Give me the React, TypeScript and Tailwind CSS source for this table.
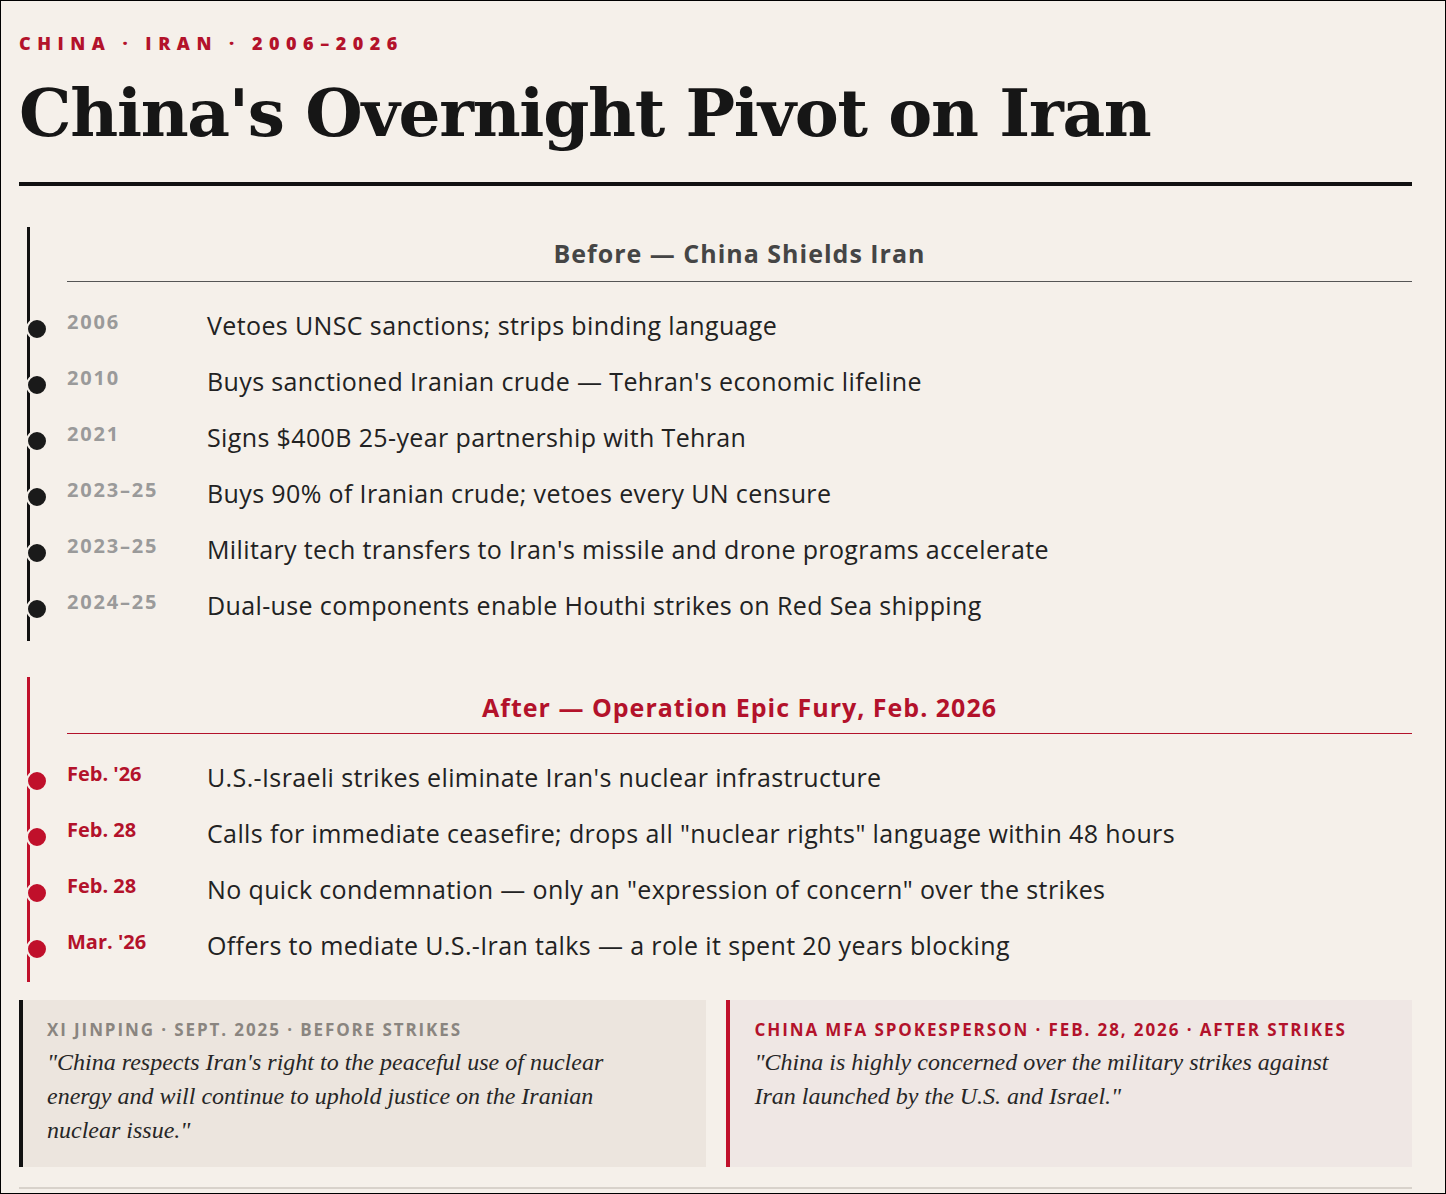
import React from 'react';

const sans = "font-['Open_Sans',_'Liberation_Sans',_sans-serif]";

interface Event {
  when: string;
  text: string;
}

const beforeEvents: Event[] = [
  { when: '2006', text: 'Vetoes UNSC sanctions; strips binding language' },
  { when: '2010', text: "Buys sanctioned Iranian crude \u2014 Tehran's economic lifeline" },
  { when: '2021', text: 'Signs $400B 25-year partnership with Tehran' },
  { when: '2023\u201325', text: 'Buys 90% of Iranian crude; vetoes every UN censure' },
  { when: '2023\u201325', text: "Military tech transfers to Iran's missile and drone programs accelerate" },
  { when: '2024\u201325', text: 'Dual-use components enable Houthi strikes on Red Sea shipping' },
];

const afterEvents: Event[] = [
  { when: "Feb. '26", text: "U.S.-Israeli strikes eliminate Iran's nuclear infrastructure" },
  { when: 'Feb. 28', text: 'Calls for immediate ceasefire; drops all "nuclear rights" language within 48 hours' },
  { when: 'Feb. 28', text: 'No quick condemnation \u2014 only an "expression of concern" over the strikes' },
  { when: "Mar. '26", text: 'Offers to mediate U.S.-Iran talks \u2014 a role it spent 20 years blocking' },
];

function Row({ event, after }: { event: Event; after?: boolean }) {
  return (
    <div className="relative flex items-start h-[56px] pt-[12px]">
      <span
        className={`absolute left-[-41px] top-[21px] h-[22px] w-[22px] rounded-full border-2 border-[#f5f0ea] ${
          after ? 'bg-[#c0102b]' : 'bg-[#1a1a1a]'
        }`}
      />
      <div
        className={`w-[140px] shrink-0 text-[20px] leading-[26px] font-bold ${
          after ? 'text-[#b3122b]' : 'text-[#9a9a9a] tracking-[1.8px]'
        }`}
      >
        {event.when}
      </div>
      <div className="text-[25px] leading-[32px] tracking-[0.375px] text-[#222]">{event.text}</div>
    </div>
  );
}

export default function App() {
  return (
    <div className={`h-[1194px] w-full overflow-hidden border border-black bg-[#f5f0ea] pl-[18px] pr-[33px] ${sans}`}>
      <div className="pt-[30px] text-[18px] leading-[24px] font-extrabold tracking-[6.5px] text-[#b3122b]">
        CHINA · IRAN · 2006–2026
      </div>
      <h1 className="mt-[18px] font-['DejaVu_Serif',_serif] text-[66px] leading-[80px] font-bold tracking-[-1.3px] text-[#161616]">
        China's Overnight Pivot on Iran
      </h1>
      <div className="mt-[29px] h-[4px] bg-[#111]" />

      {/* Before */}
      <section className="mt-[41px] ml-[8px] border-l-[3px] border-[#111] pl-[37px] pb-[8px]">
        <div className="pt-[10px] pb-[12px] border-b border-[#555] text-center text-[25px] leading-[32px] font-bold tracking-[1px] text-[#454545]">
          Before — China Shields Iran
        </div>
        <div className="pt-[15px]">
          {beforeEvents.map((e, i) => (
            <Row key={i} event={e} />
          ))}
        </div>
      </section>

      {/* After */}
      <section className="mt-[36px] ml-[8px] border-l-[3px] border-[#c0102b] pl-[37px] pb-[9px]">
        <div className="pt-[14px] pb-[10px] border-b border-[#b3122b] text-center text-[25px] leading-[32px] font-bold tracking-[1px] text-[#b3122b]">
          After — Operation Epic Fury, Feb. 2026
        </div>
        <div className="pt-[15px]">
          {afterEvents.map((e, i) => (
            <Row key={i} event={e} after />
          ))}
        </div>
      </section>

      {/* Quotes */}
      <div className="mt-[18px] grid grid-cols-2 gap-5">
        <div className="h-[167px] border-l-4 border-[#111] bg-[#ece5de] pl-[24px] pr-4 pt-[20px]">
          <div className="text-[17px] leading-[20px] font-bold tracking-[1.9px] text-[#8a8580]">
            XI JINPING · SEPT. 2025 · BEFORE STRIKES
          </div>
          <p className="mt-[5px] max-w-[590px] font-['Liberation_Serif',_serif] italic text-[24px] leading-[34px] text-[#262626]">
            "China respects Iran's right to the peaceful use of nuclear energy and will continue to uphold justice on the
            Iranian nuclear issue."
          </p>
        </div>
        <div className="h-[167px] border-l-4 border-[#c0102b] bg-[#efe7e4] pl-[25px] pr-4 pt-[20px]">
          <div className="text-[17px] leading-[20px] font-bold tracking-[1.9px] text-[#b3122b]">
            CHINA MFA SPOKESPERSON · FEB. 28, 2026 · AFTER STRIKES
          </div>
          <p className="mt-[5px] max-w-[590px] font-['Liberation_Serif',_serif] italic text-[24px] leading-[34px] text-[#262626]">
            "China is highly concerned over the military strikes against Iran launched by the U.S. and Israel."
          </p>
        </div>
      </div>
      <div className="mt-[20px] h-[2px] bg-[#d8d2cb]" />
    </div>
  );
}
